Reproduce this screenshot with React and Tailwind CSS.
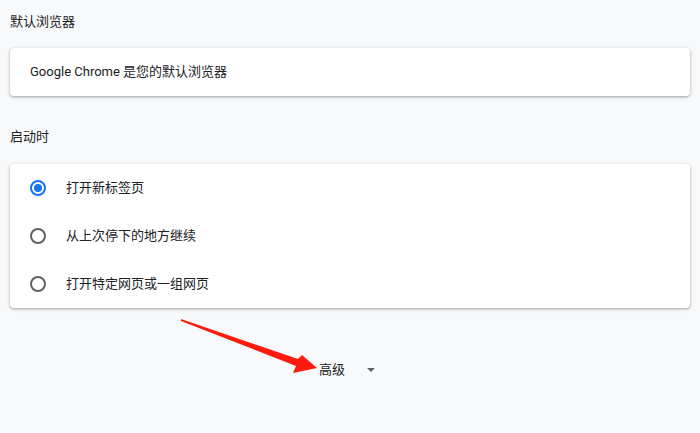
import React, { useState } from "react";

const options = ["打开新标签页", "从上次停下的地方继续", "打开特定网页或一组网页"];

function Radio({ checked }) {
  return (
    <span
      className={
        "flex h-[16px] w-[16px] items-center justify-center rounded-full border-2 " +
        (checked ? "border-[#1a73e8]" : "border-[#5f6368]")
      }
    >
      {checked ? <span className="h-[8px] w-[8px] rounded-full bg-[#1a73e8]" /> : null}
    </span>
  );
}

export default function App() {
  const [selected, setSelected] = useState(0);

  return (
    <div
      className="relative h-[433px] w-[700px] overflow-hidden bg-[#f8f9fa] px-[10px] text-[13px] text-[#202124]"
      style={{ fontFamily: 'Roboto, "Noto Sans CJK SC", sans-serif' }}
    >
      {/* 默认浏览器 */}
      <div className="pt-[14px] leading-[16px]">默认浏览器</div>
      <div className="mt-[18px] flex h-[48px] items-center rounded-[4px] bg-white px-[20px] shadow-[0_1px_2px_rgba(60,64,67,0.3),0_1px_3px_1px_rgba(60,64,67,0.15)]">
        Google Chrome 是您的默认浏览器
      </div>

      {/* 启动时 */}
      <div className="mt-[33px] leading-[16px]">启动时</div>
      <div className="mt-[19px] rounded-[4px] bg-white shadow-[0_1px_2px_rgba(60,64,67,0.3),0_1px_3px_1px_rgba(60,64,67,0.15)]">
        {options.map((label, i) => (
          <div
            key={label}
            onClick={() => setSelected(i)}
            className="flex h-[48px] cursor-pointer items-center pl-[20px]"
          >
            <Radio checked={selected === i} />
            <span className="ml-[20px]">{label}</span>
          </div>
        ))}
      </div>

      {/* 高级 */}
      <div className="mt-[54px] flex items-center justify-center pr-[6px]">
        <span className="leading-[16px]">高级</span>
        <span className="ml-[22px] h-0 w-0 border-x-[4px] border-t-[4px] border-x-transparent border-t-[#5f6368]" />
      </div>

      {/* red annotation arrow */}
      <svg className="absolute left-0 top-0" width="700" height="433">
        <polygon
          points="181,319 298,359 302,355 317,368 293,373 296,366 181,321"
          fill="#ff1a0f"
        />
      </svg>
    </div>
  );
}
